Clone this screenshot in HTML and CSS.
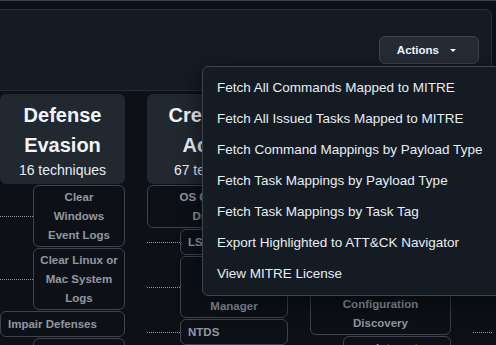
FILE: index.html
```html
<!DOCTYPE html>
<html lang="en">
<head>
    <meta charset="UTF-8">
    <meta name="viewport" content="width=device-width, initial-scale=1.0">
    <title>MITRE ATT&amp;CK</title>
    <link rel="stylesheet" href="styles.css">
</head>
<body>
    <div class="top-line"></div>

    <div class="toolbar">
        <button type="button" class="btn-actions">Actions<span class="caret"></span></button>
    </div>

    <div class="matrix">
        <div class="tactic tactic-narrow">
            <div class="tactic-card">
                <div class="tactic-name">Defense Evasion</div>
                <div class="tactic-count">16 techniques</div>
            </div>
            <div class="tech sub">Clear Windows Event Logs</div>
            <div class="tech sub">Clear Linux or Mac System Logs</div>
            <div class="tech single">Impair Defenses</div>
            <div class="tech sub">Disable or Modify Tools</div>
        </div>

        <div class="tactic">
            <div class="tactic-card">
                <div class="tactic-name">Credential Access</div>
                <div class="tactic-count">67 techniques</div>
            </div>
            <div class="tech">OS Credential Dumping</div>
            <div class="tech sub single">LSASS Memory</div>
            <div class="tech sub">Security Account Manager</div>
            <div class="tech sub single">NTDS</div>
        </div>

        <div class="tactic">
            <div class="tactic-card">
                <div class="tactic-name">Discovery</div>
                <div class="tactic-count">41 techniques</div>
            </div>
            <div class="tech">Application Window Discovery</div>
            <div class="tech">Browser Information Discovery</div>
            <div class="tech">System Network Configuration Discovery</div>
            <div class="tech sub">Internet Connection Discovery</div>
        </div>

        <div class="tactic">
            <div class="tactic-card">
                <div class="tactic-name">Lateral Movement</div>
                <div class="tactic-count">12 techniques</div>
            </div>
            <div class="tech single">Remote Services</div>
            <div class="tech sub">Remote Desktop Protocol</div>
            <div class="tech sub">Distributed Component Object Model</div>
            <div class="tech sub single">SSH</div>
        </div>
    </div>

    <!-- menu aberto do botão Actions -->
    <div class="menu">
        <div class="menu-item">Fetch All Commands Mapped to MITRE</div>
        <div class="menu-item">Fetch All Issued Tasks Mapped to MITRE</div>
        <div class="menu-item">Fetch Command Mappings by Payload Type</div>
        <div class="menu-item">Fetch Task Mappings by Payload Type</div>
        <div class="menu-item">Fetch Task Mappings by Task Tag</div>
        <div class="menu-item">Export Highlighted to ATT&amp;CK Navigator</div>
        <div class="menu-item">View MITRE License</div>
    </div>
</body>
</html>
```

FILE: styles.css
```css
* {
    margin: 0;
    padding: 0;
    box-sizing: border-box;
}

body {
    font-family: 'Liberation Sans', Arial, Helvetica, sans-serif;
    background: #0d1117;
    color: #e6edf3;
    height: 345px;
    overflow: hidden;
}

.top-line {
    height: 1px;
    background: #3d444d;
}

.toolbar {
    height: 82px;
    margin: 8px 4px 0 -8px;
    background: #151b23;
    border: 1px solid #262c36;
    border-radius: 6px;
    display: flex;
    align-items: center;
    justify-content: flex-end;
    padding-right: 12px;
}

.btn-actions {
    height: 28px;
    padding: 0 22px 0 17px;
    background: #262c36;
    border: 1px solid #3d444d;
    border-radius: 6px;
    color: #f0f6fc;
    font-family: inherit;
    font-size: 11.5px;
    font-weight: 700;
    display: flex;
    align-items: center;
}

.caret {
    margin-left: 11px;
    width: 0;
    height: 0;
    border-left: 3px solid transparent;
    border-right: 3px solid transparent;
    border-top: 3px solid #f0f6fc;
}

.matrix {
    display: flex;
    align-items: flex-start;
    gap: 22px;
    margin: 3px 4px 0 0;
    overflow: hidden;
}

.tactic {
    flex: 0 0 141px;
    display: flex;
    flex-direction: column;
}

.tactic-narrow {
    flex-basis: 125px;
}

.tactic-card {
    height: 90px;
    background: #212830;
    border-radius: 6px;
    padding: 6px 4px 4px;
    text-align: center;
}

.tactic-name {
    font-size: 20px;
    font-weight: 700;
    line-height: 30px;
    color: #f0f6fc;
}

.tactic-count {
    font-size: 14px;
    line-height: 20px;
    color: #e6edf3;
}

.tech {
    margin-top: 1px;
    border: 1px solid #3d444d;
    border-radius: 6px;
    padding: 2px 6px 1px;
    font-size: 11.5px;
    font-weight: 700;
    line-height: 19px;
    color: #9198a1;
    text-align: center;
}

.tech.single {
    text-align: left;
    padding: 3px 7px 2px;
}

.sub {
    margin-left: 33px;
    position: relative;
}

.sub::before {
    content: "";
    position: absolute;
    left: -34px;
    top: 50%;
    width: 33px;
    border-top: 1px dotted #9198a1;
}

.menu {
    position: absolute;
    top: 66px;
    left: 202px;
    width: 310px;
    padding: 5px 0 6px;
    background: #151b23;
    border: 1px solid #3d444d;
    border-radius: 6px;
    box-shadow: 0 8px 24px rgba(1, 4, 9, 0.6);
}

.menu-item {
    padding-left: 14px;
    font-size: 13.5px;
    line-height: 31px;
    white-space: nowrap;
    color: #e6edf3;
}
```
